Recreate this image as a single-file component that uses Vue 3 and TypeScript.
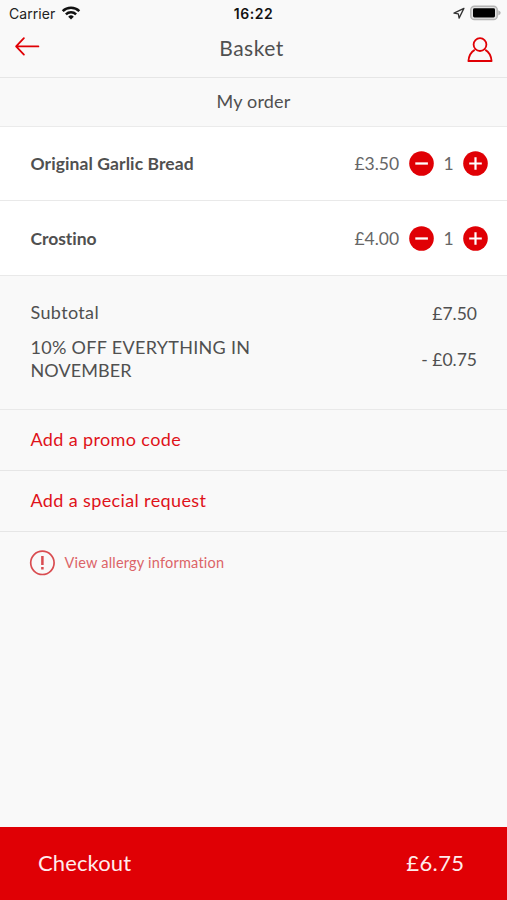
<script setup lang="ts">
import { ref } from 'vue'

interface BasketItem {
  name: string
  cls: string
  price: string
  qty: number
}

const items = ref<BasketItem[]>([
  { name: 'Original Garlic Bread', cls: 'garlic', price: '£3.50', qty: 1 },
  { name: 'Crostino', cls: 'crostino', price: '£4.00', qty: 1 },
])
</script>

<template>
  <main class="screen">
    <div class="status">
      <div class="carrier">
        <span>Carrier</span>
        <svg width="20" height="15" viewBox="0 0 20 15" fill="none" stroke="#111" stroke-width="2.5">
          <path d="M1.7 5.2a11.8 11.8 0 0 1 16.6 0" />
          <path d="M4.9 8.4a7.3 7.3 0 0 1 10.2 0" />
          <path d="M10 13.6l-2.8-2.9a4 4 0 0 1 5.6 0z" fill="#111" stroke="none" />
        </svg>
      </div>
      <span class="time">16:22</span>
      <div class="indicators">
        <svg width="12" height="12" viewBox="0 0 12 12" fill="none" stroke="#333" stroke-width="1.3" stroke-linejoin="round">
          <path d="M10.9 1.4L1 6.2l4.3.7.8 4.2z" />
        </svg>
        <svg width="31" height="16" viewBox="0 0 31 16">
          <rect x=".8" y="1.2" width="26.4" height="13.4" rx="3.6" fill="#e2e2e2" stroke="#b4b4b4" stroke-width="1.5" />
          <rect x="3" y="3.3" width="22" height="9.2" rx="1.4" fill="#000" />
          <path d="M28.3 5.2q2.4 1 2.4 2.6t-2.4 2.6z" fill="#b0b0b0" />
        </svg>
      </div>
    </div>

    <header class="nav">
      <svg class="back" width="26" height="20" viewBox="0 0 26 20" fill="none" stroke="#e00005" stroke-width="1.8" stroke-linecap="round" stroke-linejoin="round">
        <path d="M24.4 10.4H2.2M9.9 2.2L2.1 10.4l7.8 8.2" />
      </svg>
      <h1>Basket</h1>
      <svg class="user" width="26" height="26" viewBox="0 0 26 26" fill="none" stroke="#e00005" stroke-width="1.8" stroke-linejoin="round">
        <circle cx="13" cy="7.6" r="6.4" />
        <path d="M7.7 12.9C4 15 1.9 19 1.4 24h23.2c-.5-5-2.6-9-6.3-11.1" />
      </svg>
    </header>

    <h2 class="section-title">My order</h2>

    <ul class="items">
      <li v-for="item in items" :key="item.name" class="item">
        <span class="name" :class="item.cls">{{ item.name }}</span>
        <span class="price">{{ item.price }}</span>
        <button class="round" aria-label="Remove one" @click="item.qty--">
          <svg width="25" height="25" viewBox="0 0 25 25">
            <circle cx="12.5" cy="12.5" r="12.3" fill="#e00005" />
            <path d="M6.3 12.5h12.6" stroke="#fff" stroke-width="2.3" />
          </svg>
        </button>
        <span class="qty">{{ item.qty }}</span>
        <button class="round" aria-label="Add one" @click="item.qty++">
          <svg width="25" height="25" viewBox="0 0 25 25">
            <circle cx="12.5" cy="12.5" r="12.3" fill="#e00005" />
            <path d="M6.2 12.5h12.6M12.5 6.2v12.6" stroke="#fff" stroke-width="2.2" />
          </svg>
        </button>
      </li>
    </ul>

    <section class="totals">
      <div class="row subtotal">
        <span class="label">Subtotal</span>
        <span class="amount">£7.50</span>
      </div>
      <div class="row discount">
        <span class="label"><span class="offer">10% OFF EVERYTHING IN</span> <span class="month">NOVEMBER</span></span>
        <span class="amount">- £0.75</span>
      </div>
    </section>

    <a class="action">Add a promo code</a>
    <a class="action">Add a special request</a>

    <a class="allergy">
      <svg width="26" height="26" viewBox="0 0 26 26" fill="none" stroke="#d94c50">
        <circle cx="13.4" cy="12.8" r="11.7" stroke-width="1.7" />
        <path d="M13.4 6.1V15M13.4 17v2.4" stroke-width="2.5" />
      </svg>
      <span>View allergy information</span>
    </a>

    <button class="checkout">
      <span class="go">Checkout</span>
      <span class="sum">£6.75</span>
    </button>
  </main>
</template>

<style>
body {
  margin: 0;
}
</style>

<style scoped>
.screen {
  width: 507px;
  height: 900px;
  display: flex;
  flex-direction: column;
  overflow: hidden;
  background: #f9f9f9;
  color: #505050;
  font-family: Lato, 'Noto Sans', sans-serif;
  font-size: 18px;
  font-variant-ligatures: none;
  box-sizing: border-box;
}
.screen * {
  box-sizing: border-box;
}
span {
  white-space: nowrap;
}
button {
  border: 0;
  padding: 0;
  background: none;
  font: inherit;
}
svg {
  display: block;
  flex: none;
}
.status {
  height: 28px;
  flex: none;
  display: grid;
  grid-template-columns: 1fr auto 1fr;
  align-items: center;
  padding: 0 6px 2px 9px;
  font-family: Inter, sans-serif;
  font-size: 14px;
  color: #222;
}
.carrier {
  display: flex;
  align-items: center;
  gap: 6px;
  letter-spacing: 0.05px;
}
.time {
  font-weight: 600;
  letter-spacing: 0.5px;
  margin-right: 3px;
  color: #111;
}
.indicators {
  display: flex;
  align-items: center;
  justify-content: flex-end;
  gap: 5px;
}
.nav {
  height: 50px;
  flex: none;
  display: grid;
  grid-template-columns: 1fr auto 1fr;
  padding: 0 14px;
  border-bottom: 1px solid #e6e6e6;
}
.back {
  margin-top: 8px;
}
.user {
  justify-self: end;
  margin-top: 9px;
}
h1 {
  margin: 0 4px 0 0;
  font-size: 21px;
  line-height: 39px;
  font-weight: 400;
  letter-spacing: 0.5px;
}
.section-title {
  height: 49px;
  flex: none;
  margin: 0;
  text-align: center;
  font-size: 18px;
  line-height: 46px;
  font-weight: 400;
  letter-spacing: 0.16px;
  border-bottom: 1px solid #ebebeb;
}
.items {
  margin: 0;
  padding: 0;
  list-style: none;
}
.item {
  height: 74px;
  display: flex;
  align-items: center;
  padding: 0 19px 0 30.5px;
  background: #fff;
  border-bottom: 1px solid #e9e9e9;
}
.item + .item {
  height: 75px;
}
.name {
  flex: 1;
  font-size: 17.5px;
  font-weight: 700;
}
.garlic {
  letter-spacing: 0.09px;
}
.crostino {
  letter-spacing: -0.05px;
}
.price {
  margin-right: 10px;
  font-size: 17.5px;
  letter-spacing: -0.05px;
  color: #666;
}
.qty {
  width: 29px;
  text-align: center;
  font-size: 17.5px;
  color: #666;
}
.totals {
  height: 134px;
  flex: none;
  padding: 25px 30px 0 30.5px;
  border-bottom: 1px solid #e9e9e9;
}
.row {
  display: flex;
  justify-content: space-between;
  align-items: center;
  line-height: 23px;
}
.label {
  letter-spacing: 0.35px;
}
.amount {
  font-size: 17.5px;
}
.subtotal {
  align-items: flex-start;
}
.subtotal .amount {
  padding-top: 1px;
}
.discount {
  margin-top: 11px;
}
.subtotal .amount,
.discount .amount {
  margin-bottom: 0;
}
.discount .label span {
  display: block;
}
.offer {
  letter-spacing: 0.3px;
}
.month {
  letter-spacing: 0.1px;
}
.action {
  height: 61px;
  flex: none;
  display: flex;
  align-items: center;
  padding: 0 30px 2px 30.5px;
  color: #df1219;
  letter-spacing: 0.37px;
  border-bottom: 1px solid #e6e6e6;
}
.allergy {
  display: flex;
  align-items: center;
  gap: 9.5px;
  padding: 18px 29px;
  color: #dc6468;
  font-size: 14.5px;
  line-height: 17px;
  letter-spacing: 0.21px;
}
.allergy span {
  padding-bottom: 1px;
}
.checkout {
  height: 73px;
  flex: none;
  margin-top: auto;
  display: flex;
  align-items: center;
  justify-content: space-between;
  padding: 0 42.5px 2px 38px;
  background: #e00005;
  color: #ffecec;
  font-size: 22px;
}
.go {
  letter-spacing: 0.12px;
}
.sum {
  letter-spacing: 0.4px;
}
</style>
